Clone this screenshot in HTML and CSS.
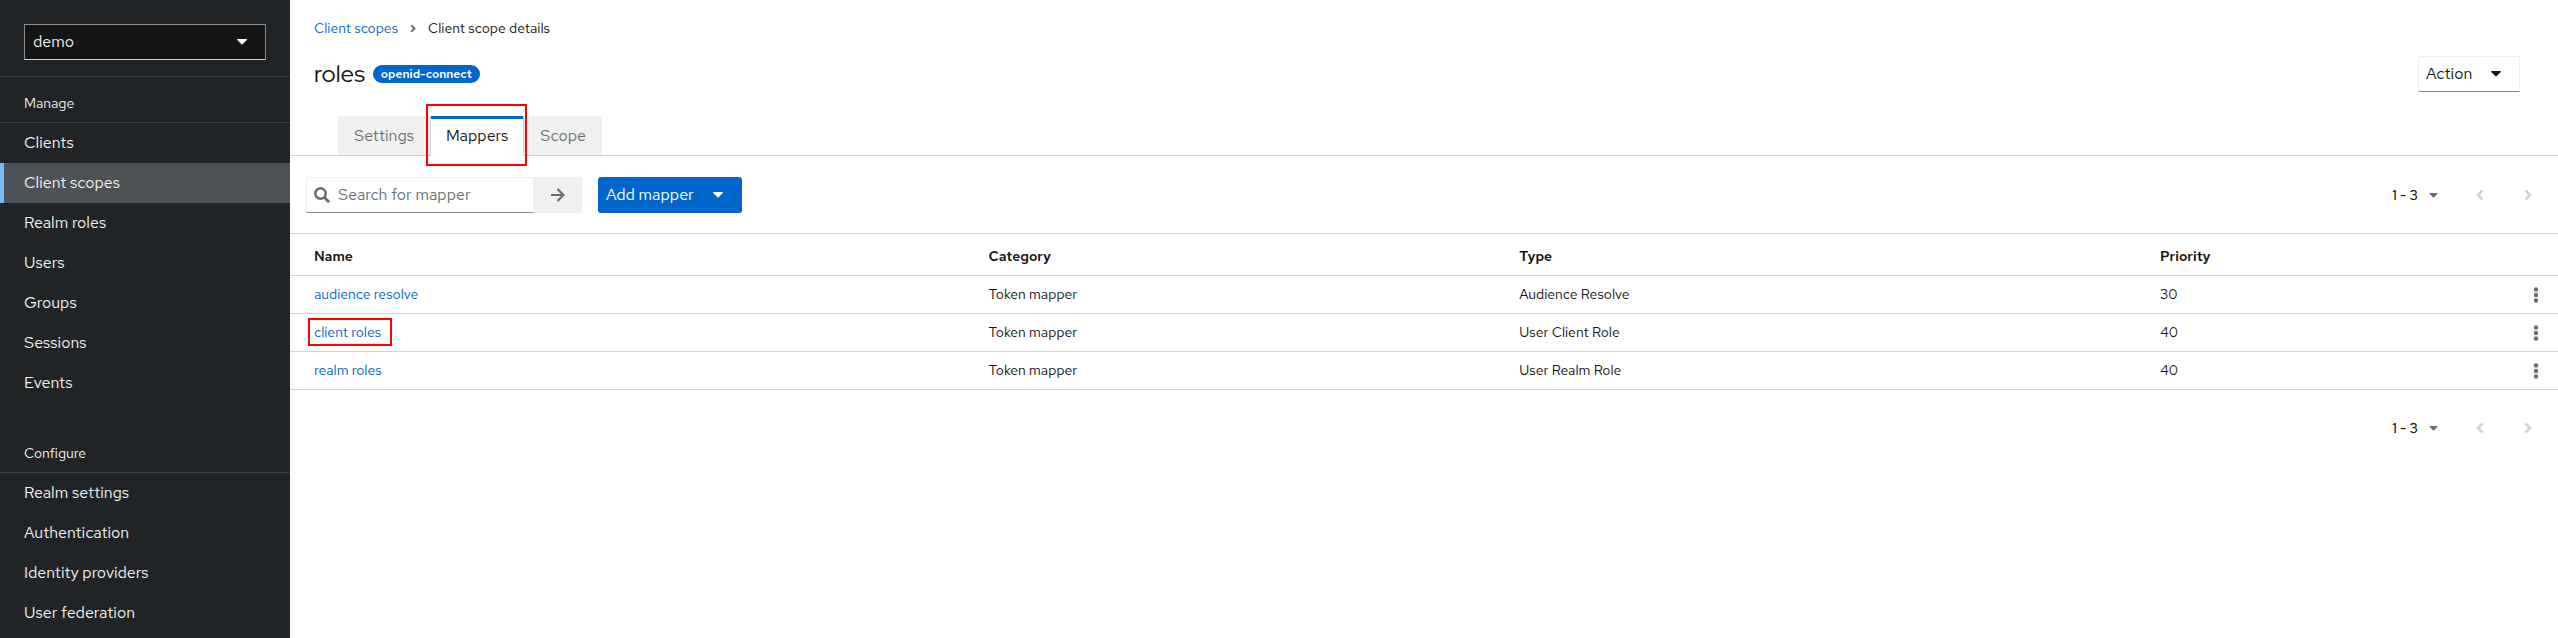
FILE: index.html
```html
<!DOCTYPE html>
<html lang="en">
<head>
<meta charset="utf-8">
<title>Client scope details</title>
<link rel="stylesheet" href="styles.css">
</head>
<body>
<svg class="sprite" aria-hidden="true">
  <symbol id="caret" viewBox="0 0 10 6"><path d="M0.6 0h8.8c.5 0 .7.6.4 1L5.5 5.3a.7.7 0 0 1-1 0L.2 1C-.1.6.1 0 .6 0z"/></symbol>
  <symbol id="left" viewBox="0 0 8 12"><path d="M6.5 1.5L2 6l4.500 4.500" fill="none" stroke="currentColor" stroke-width="2.600"/></symbol>
  <symbol id="right" viewBox="0 0 8 12"><path d="M1.500 1.500L6 6l-4.500 4.500" fill="none" stroke="currentColor" stroke-width="2.600"/></symbol>
  <symbol id="dots" viewBox="0 0 6 16"><circle cx="3" cy="2.500" r="2.200"/><circle cx="3" cy="8" r="2.200"/><circle cx="3" cy="13.500" r="2.200"/></symbol>
</svg>
<div class="page">
  <aside class="sidebar">
    <div class="realm">
      <select class="realm-select" aria-label="Realm"><option>demo</option></select>
      <svg class="caret realm-caret" aria-hidden="true"><use href="#caret"/></svg>
    </div>
    <nav class="nav" aria-label="Manage">
      <h2 class="nav-title">Manage</h2>
      <a class="nav-link" href="#">Clients</a>
      <a class="nav-link current" href="#" aria-current="page">Client scopes</a>
      <a class="nav-link" href="#">Realm roles</a>
      <a class="nav-link" href="#">Users</a>
      <a class="nav-link" href="#">Groups</a>
      <a class="nav-link" href="#">Sessions</a>
      <a class="nav-link" href="#">Events</a>
    </nav>
    <nav class="nav" aria-label="Configure">
      <h2 class="nav-title">Configure</h2>
      <a class="nav-link" href="#">Realm settings</a>
      <a class="nav-link" href="#">Authentication</a>
      <a class="nav-link" href="#">Identity providers</a>
      <a class="nav-link" href="#">User federation</a>
    </nav>
  </aside>
  <main class="main">
    <nav class="breadcrumb" aria-label="Breadcrumb">
      <a class="link" href="#">Client scopes</a>
      <svg class="crumb-arrow" aria-hidden="true"><use href="#right"/></svg>
      <span>Client scope details</span>
    </nav>
    <header class="heading">
      <h1 class="title">roles</h1>
      <span class="badge">openid-connect</span>
      <button class="action" type="button">Action<svg class="caret" aria-hidden="true"><use href="#caret"/></svg></button>
    </header>
    <div class="tabs" role="tablist">
      <button class="tab" type="button" role="tab">Settings</button>
      <button class="tab selected marked" type="button" role="tab" aria-selected="true">Mappers</button>
      <button class="tab" type="button" role="tab">Scope</button>
    </div>
    <div class="toolbar">
      <form class="search">
        <label class="search-box">
          <svg class="search-icon" viewBox="0 0 16 16" aria-hidden="true"><circle cx="6.500" cy="6.500" r="5.200" fill="none" stroke="currentColor" stroke-width="2.600"/><path d="M10.200 10.200l4.900 4.900" stroke="currentColor" stroke-width="3"/></svg>
          <input class="search-input" type="search" placeholder="Search for mapper" aria-label="Search for mapper">
        </label>
        <button class="search-go" type="button" aria-label="Search"><svg class="go-icon" viewBox="0 0 14 14" aria-hidden="true"><path d="M0 7h12M6.500 1L12.500 7l-6 6" fill="none" stroke="currentColor" stroke-width="2.200"/></svg></button>
      </form>
      <button class="add" type="button">Add mapper<svg class="caret" aria-hidden="true"><use href="#caret"/></svg></button>
      <div class="pagination">
        <button class="range" type="button">1 - 3<svg class="range-caret" aria-hidden="true"><use href="#caret"/></svg></button>
        <button class="step" type="button" disabled aria-label="Previous"><svg class="chevron" aria-hidden="true"><use href="#left"/></svg></button>
        <button class="step" type="button" disabled aria-label="Next"><svg class="chevron" aria-hidden="true"><use href="#right"/></svg></button>
      </div>
    </div>
    <table class="table">
      <thead>
        <tr><th class="col-name">Name</th><th class="col-category">Category</th><th class="col-type">Type</th><th>Priority</th><th class="col-menu"></th></tr>
      </thead>
      <tbody>
        <tr><td><a class="link" href="#">audience resolve</a></td><td>Token mapper</td><td>Audience Resolve</td><td>30</td><td class="col-menu"><button class="kebab" type="button" aria-label="Actions"><svg class="dots" aria-hidden="true"><use href="#dots"/></svg></button></td></tr>
        <tr><td><a class="link marked" href="#">client roles</a></td><td>Token mapper</td><td>User Client Role</td><td>40</td><td class="col-menu"><button class="kebab" type="button" aria-label="Actions"><svg class="dots" aria-hidden="true"><use href="#dots"/></svg></button></td></tr>
        <tr><td><a class="link" href="#">realm roles</a></td><td>Token mapper</td><td>User Realm Role</td><td>40</td><td class="col-menu"><button class="kebab" type="button" aria-label="Actions"><svg class="dots" aria-hidden="true"><use href="#dots"/></svg></button></td></tr>
      </tbody>
    </table>
    <div class="footer">
      <div class="pagination">
        <button class="range" type="button">1 - 3<svg class="range-caret" aria-hidden="true"><use href="#caret"/></svg></button>
        <button class="step" type="button" disabled aria-label="Previous"><svg class="chevron" aria-hidden="true"><use href="#left"/></svg></button>
        <button class="step" type="button" disabled aria-label="Next"><svg class="chevron" aria-hidden="true"><use href="#right"/></svg></button>
      </div>
    </div>
  </main>
</div>
</body>
</html>
```
FILE: styles.css
```css
* { box-sizing: border-box; }
body {
  margin: 0;
  font-family: "Red Hat Text", Roboto, "Open Sans", sans-serif;
  font-size: 16px;
  line-height: 24px;
  color: #151515;
  background: #fff;
}
button, input, select { font: inherit; color: inherit; margin: 0; border: 0; background: none; }
button { padding: 0; }
a { text-decoration: none; }
svg { fill: currentColor; flex: none; display: block; }
.sprite { position: absolute; width: 0; height: 0; }

.page { display: flex; min-height: 100vh; }

.sidebar { width: 290px; flex: none; background: #212427; color: #f0f0f0; }
.realm { position: relative; padding: 24px 24px 16px; border-bottom: 1px solid #3c3f42; }
.realm-select {
  display: block;
  width: 100%;
  height: 36px;
  padding: 0 8px;
  appearance: none;
  border: 1px solid #8a8d90;
  border-bottom-color: #d2d2d2;
  border-radius: 0;
  background: #151515;
}
.caret { width: 10px; height: 6px; }
.realm-caret { position: absolute; right: 43px; top: 39px; color: #fff; }
.nav { margin-bottom: 24px; }
.nav + .nav { margin-bottom: 0; }
.nav-title {
  margin: 0;
  padding: 16px 24px 8px;
  font-size: 14px;
  line-height: 21px;
  font-weight: 400;
  border-bottom: 1px solid #3c3f42;
}
.nav-link { display: block; padding: 8px 24px; color: #f0f0f0; }
.current { background: #4f5255; box-shadow: inset 4px 0 #73bcf7; }

.main { flex: 1; min-width: 0; }
.breadcrumb {
  display: flex;
  align-items: center;
  gap: 12px;
  padding: 16px 24px 0;
  font-size: 14px;
}
.link { color: #06c; }
.crumb-arrow { width: 6px; height: 9px; color: #6a6e73; }
.heading { display: flex; align-items: center; gap: 8px; padding: 16px 38px 24px 24px; }
.title {
  margin: 0;
  font-family: "Red Hat Display", "Red Hat Text", Roboto, sans-serif;
  font-size: 24px;
  line-height: 32px;
  font-weight: 400;
}
.badge {
  padding: 0 8px;
  border-radius: 16px;
  background: #06c;
  color: #fff;
  font-size: 12px;
  line-height: 18px;
  font-weight: 600;
}
.action {
  display: flex;
  align-items: center;
  justify-content: space-between;
  width: 102px;
  height: 36px;
  margin-left: auto;
  padding: 0 18px 0 7px;
  border: 1px solid #f0f0f0;
  border-bottom-color: #8a8d90;
}

.tabs { display: flex; padding-left: 48px; border-bottom: 1px solid #d2d2d2; }
.tab { height: 39px; padding: 0 16px; background: #f0f0f0; color: #6a6e73; }
.selected {
  height: 40px;
  margin-bottom: -1px;
  padding: 0 15px;
  border: solid #d2d2d2;
  border-width: 0 1px;
  background: #fff;
  color: #151515;
  box-shadow: inset 0 3px #06c;
}
.marked { position: relative; }
.marked::after { content: ""; position: absolute; border: 2px solid #f00; }
.tab.marked::after { inset: -12px -4px -10px -5px; }
.link.marked::after { inset: -5px -11px -5px -6px; }

.toolbar { display: flex; align-items: center; gap: 16px; padding: 21px 6px 20px 16px; }
.search { display: flex; }
.search-box {
  display: flex;
  align-items: center;
  gap: 8px;
  width: 228px;
  height: 36px;
  padding: 0 7px;
  border: 1px solid #f0f0f0;
  border-bottom-color: #8a8d90;
  color: #6a6e73;
}
.search-icon { width: 16px; height: 16px; }
.search-input { flex: 1; min-width: 0; padding: 0; outline: 0; }
.search-input::placeholder { color: #6a6e73; opacity: 1; }
.search-go {
  display: flex;
  align-items: center;
  justify-content: center;
  width: 48px;
  background: #f0f0f0;
  color: #6a6e73;
}
.go-icon { width: 14px; height: 14px; }
.add {
  display: flex;
  align-items: center;
  justify-content: space-between;
  width: 144px;
  height: 36px;
  padding: 0 19px 0 8px;
  border-radius: 3px;
  background: #06c;
  color: #fff;
}
.pagination { display: flex; align-items: center; margin-left: auto; font-size: 14px; }
.range { display: flex; align-items: center; gap: 11px; margin-right: 18px; font-weight: 500; }
.range-caret { width: 9px; height: 5px; color: #6a6e73; }
.step { display: flex; justify-content: center; width: 48px; color: #d2d2d2; }
.chevron { width: 8px; height: 12px; }

.table {
  width: 100%;
  table-layout: fixed;
  border-collapse: collapse;
  border-top: 1px solid #d2d2d2;
  font-size: 14px;
  line-height: 21px;
}
.table tr { border-bottom: 1px solid #d2d2d2; }
.table th, .table td { height: 38px; padding: 0 8px; text-align: left; }
.table th { height: 42px; padding-top: 4px; font-weight: 600; }
.table th:first-child, .table td:first-child { padding-left: 24px; }
.col-name { width: 30.45%; }
.col-category { width: 23.4%; }
.col-type { width: 28.25%; }
.table .col-menu { width: 44px; padding: 0; }
.kebab { display: flex; justify-content: center; width: 44px; color: #6a6e73; }
.dots { width: 6px; height: 16px; }
.footer { display: flex; padding: 26px 6px; }
```
